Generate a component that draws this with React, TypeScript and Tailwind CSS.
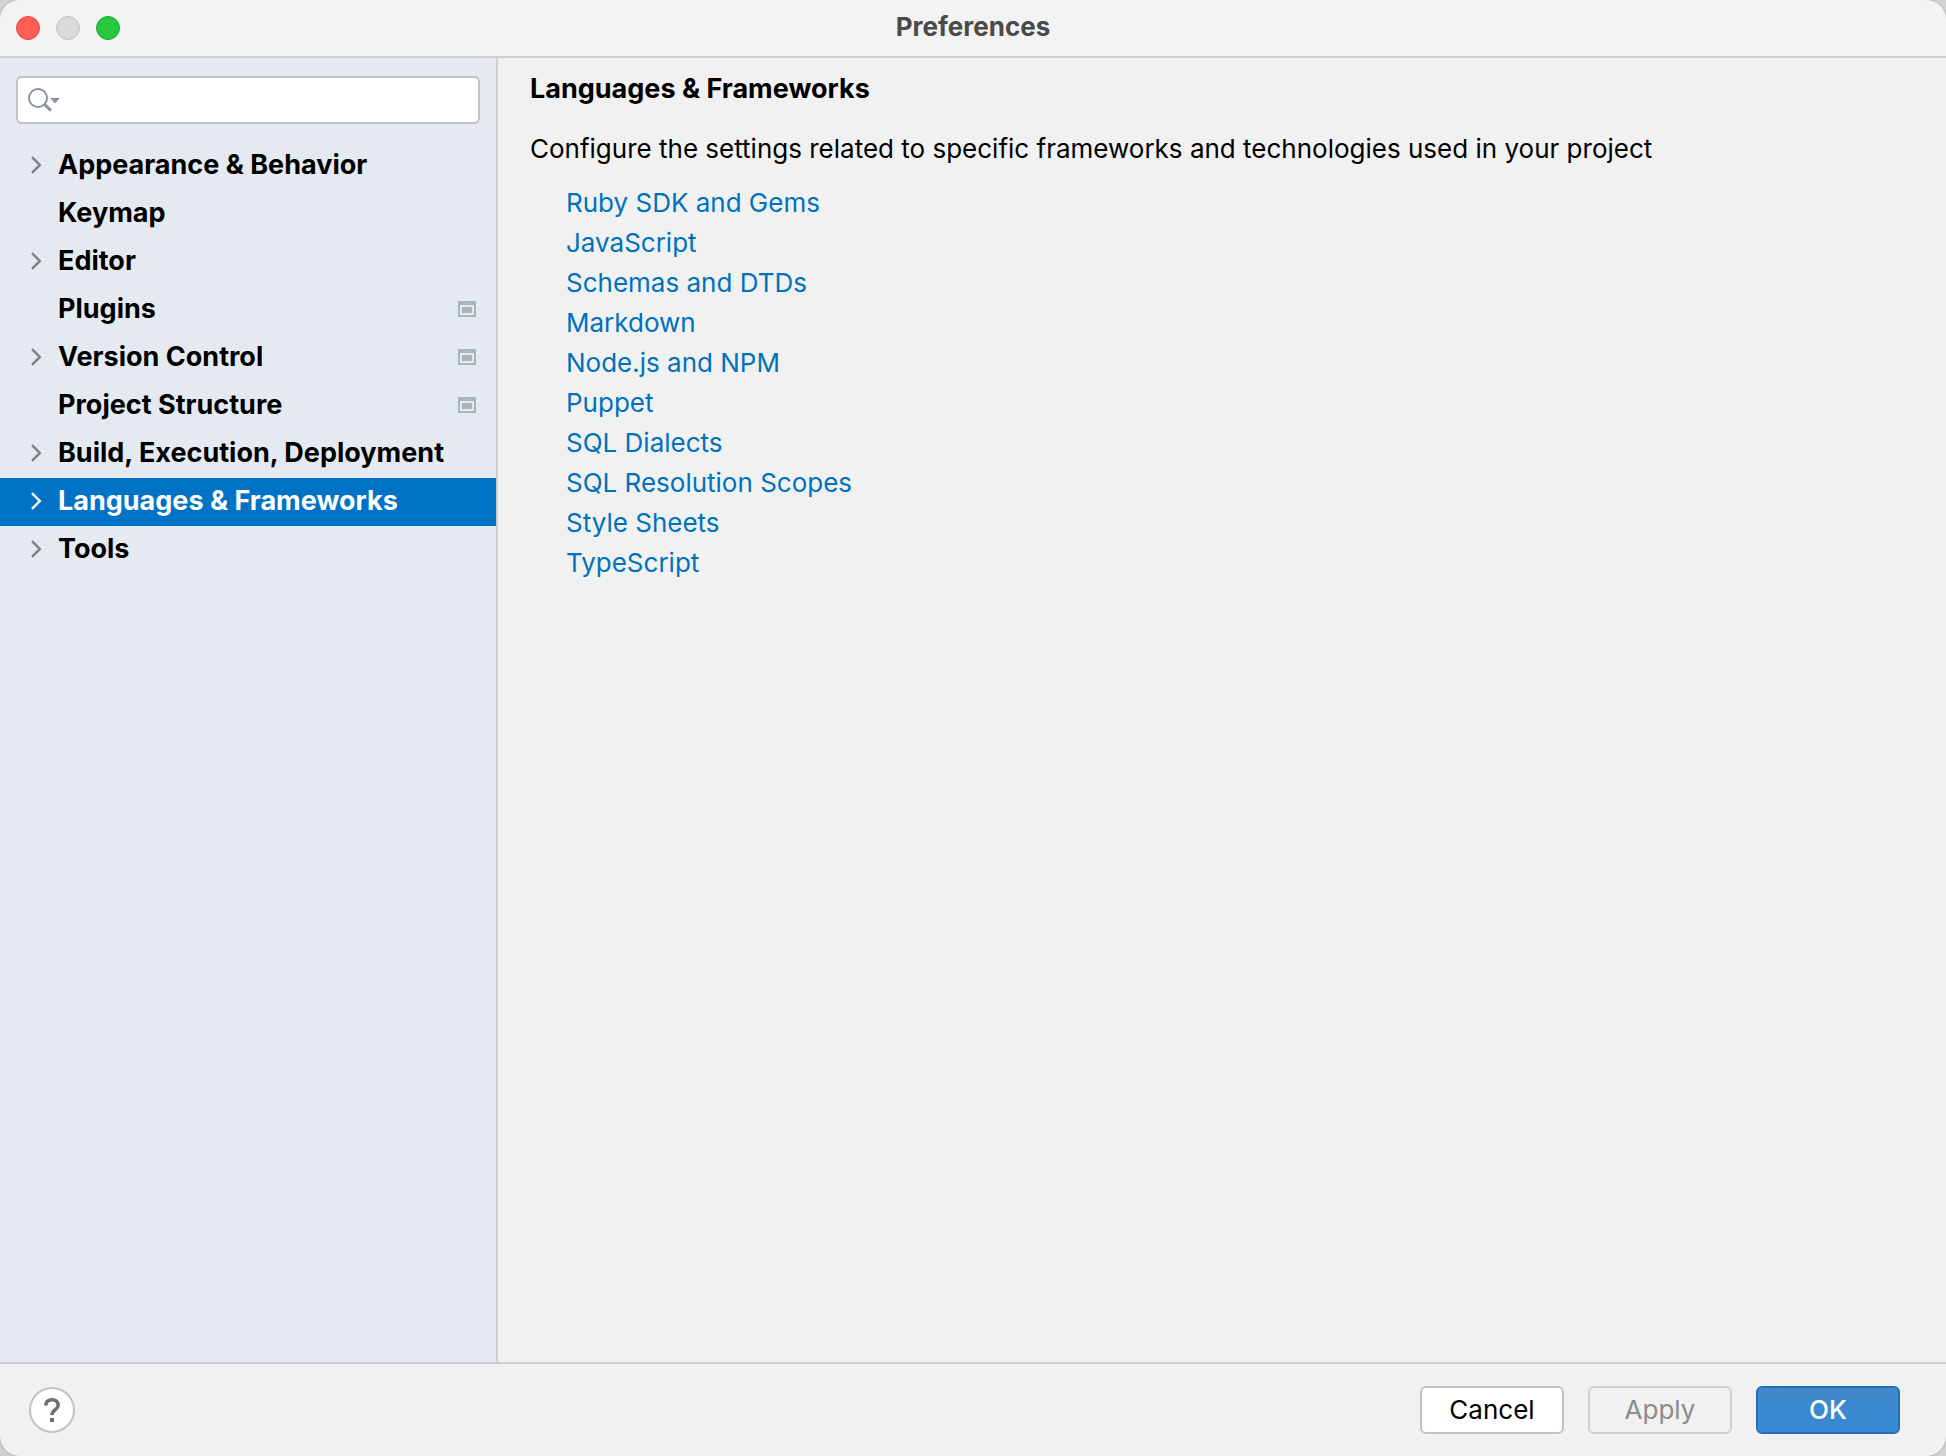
import React from "react";

type Category = { label: string; expandable?: boolean; project?: boolean; selected?: boolean };

const categories: Category[] = [
  { label: "Appearance & Behavior", expandable: true },
  { label: "Keymap" },
  { label: "Editor", expandable: true },
  { label: "Plugins", project: true },
  { label: "Version Control", expandable: true, project: true },
  { label: "Project Structure", project: true },
  { label: "Build, Execution, Deployment", expandable: true },
  { label: "Languages & Frameworks", expandable: true, selected: true },
  { label: "Tools", expandable: true },
];

const links = [
  "Ruby SDK and Gems",
  "JavaScript",
  "Schemas and DTDs",
  "Markdown",
  "Node.js and NPM",
  "Puppet",
  "SQL Dialects",
  "SQL Resolution Scopes",
  "Style Sheets",
  "TypeScript",
];

function Chevron() {
  return (
    <svg width="12" height="18" viewBox="0 0 12 18" fill="none" stroke="currentColor" strokeWidth="2.4" aria-hidden="true">
      <path d="M2 1.200 9.800 9 2 16.800" />
    </svg>
  );
}

function ProjectIcon() {
  return (
    <svg width="18" height="16" viewBox="0 0 18 16" fill="#a7b5be" aria-hidden="true" className="shrink-0">
      <path fillRule="evenodd" d="M0 0h18v16H0zM2 4v10h14V4z" />
      <path d="M4 6h10v6H4z" />
    </svg>
  );
}

function SearchIcon() {
  return (
    <svg width="34" height="26" viewBox="0 0 34 26" fill="none" stroke="#87959d" aria-hidden="true" className="shrink-0">
      <circle cx="12" cy="11" r="9" strokeWidth="2" />
      <path d="M18.200 17.200 25 23.600" strokeWidth="3" />
      <path d="M24 11h10l-5 5.500z" fill="#87959d" stroke="none" />
    </svg>
  );
}

function Sidebar() {
  return (
    <aside className="flex w-[498px] shrink-0 flex-col border-r-2 border-[#cfcfcf] bg-[#e5eaf2]">
      <label className="mx-4 mt-[18px] flex h-12 items-center rounded-md border-2 border-[#c2c2c2] bg-white pl-2">
        <SearchIcon />
        <input type="text" aria-label="Search preferences" className="min-w-0 flex-1 bg-transparent px-2 outline-none" />
      </label>
      <nav className="mt-[18px]" aria-label="Preference categories">
        <ul>
          {categories.map((c) => (
            <li key={c.label}>
              <button
                type="button"
                aria-current={c.selected ? "page" : undefined}
                className={
                  "flex h-12 w-full items-center pr-5 pb-[3px] pl-[30px] text-left text-[27px] font-bold " +
                  (c.selected ? "bg-[#0073c6] text-white" : "text-black")
                }
              >
                <span className={"flex w-7 shrink-0 items-center " + (c.selected ? "text-white" : "text-[#7f7f7f]")}>
                  {c.expandable && <Chevron />}
                </span>
                <span className="flex-1 whitespace-nowrap">{c.label}</span>
                {c.project && <ProjectIcon />}
              </button>
            </li>
          ))}
        </ul>
      </nav>
    </aside>
  );
}

export default function App() {
  return (
    <div className="min-h-screen bg-[#d2d2d2] font-['Inter',sans-serif] text-[26px] leading-8">
      <div className="flex min-h-screen flex-col overflow-hidden rounded-[20px] bg-[#f1f1f1] shadow-[0_0_2px_#8a8a8a]">
        <header className="grid h-[58px] shrink-0 grid-cols-[1fr_auto_1fr] items-center border-b-2 border-[#cdd0d2] bg-[#f2f4f3]">
          <div className="flex gap-4 pl-4">
            <button type="button" aria-label="Close" className="size-6 rounded-full border border-[#e2463f] bg-[#ff5f57]" />
            <button type="button" aria-label="Minimize" className="size-6 rounded-full border border-[#bfc1c0] bg-[#d8dad9]" />
            <button type="button" aria-label="Zoom" className="size-6 rounded-full border border-[#1dad2b] bg-[#28c840]" />
          </div>
          <h1 className="pb-0.5 font-bold text-[#4a4a4a]">Preferences</h1>
        </header>
        <div className="flex flex-1">
          <Sidebar />
          <main className="min-w-0 flex-1 px-8 pt-[15px]">
            <h2 className="text-[27px] font-bold text-black">Languages &amp; Frameworks</h2>
            <p className="mt-7 text-black">
              Configure the settings related to specific frameworks and technologies used in your project
            </p>
            <ul className="mt-[18px] pl-9">
              {links.map((l) => (
                <li key={l} className="flex h-10 items-center">
                  <a href="#" className="text-[#0071bc]">{l}</a>
                </li>
              ))}
            </ul>
          </main>
        </div>
        <footer className="flex h-[94px] shrink-0 items-center justify-between border-t-2 border-[#cfcfcf] pr-[46px] pl-[29px]">
          <button
            type="button"
            aria-label="Help"
            className="flex size-[46px] items-center justify-center rounded-full border-2 border-[#c2c2c2] bg-white text-[#6e6e6e]"
          >
            <svg width="18" height="26" viewBox="0 0 18 26" fill="none" stroke="currentColor" aria-hidden="true">
              <path d="M2.800 8.500C2.800 4.500 5.400 2.800 9 2.800s6.200 2 6.200 5.400c0 4.400-6.200 4.600-6.200 9.800" strokeWidth="3.600" />
              <path d="M7 21h4v4H7z" fill="currentColor" stroke="none" />
            </svg>
          </button>
          <div className="flex gap-6">
            <button type="button" className="h-12 w-36 rounded-md border-2 border-[#c2c2c2] bg-white text-black">
              Cancel
            </button>
            <button type="button" disabled className="h-12 w-36 rounded-md border-2 border-[#cfcfcf] text-[#8c8c8c]">
              Apply
            </button>
            <button
              type="button"
              className="h-12 w-36 rounded-md border-2 border-[#2470b3] bg-linear-to-b from-[#4089ca] to-[#3589d3] font-medium text-white"
            >
              OK
            </button>
          </div>
        </footer>
      </div>
    </div>
  );
}
